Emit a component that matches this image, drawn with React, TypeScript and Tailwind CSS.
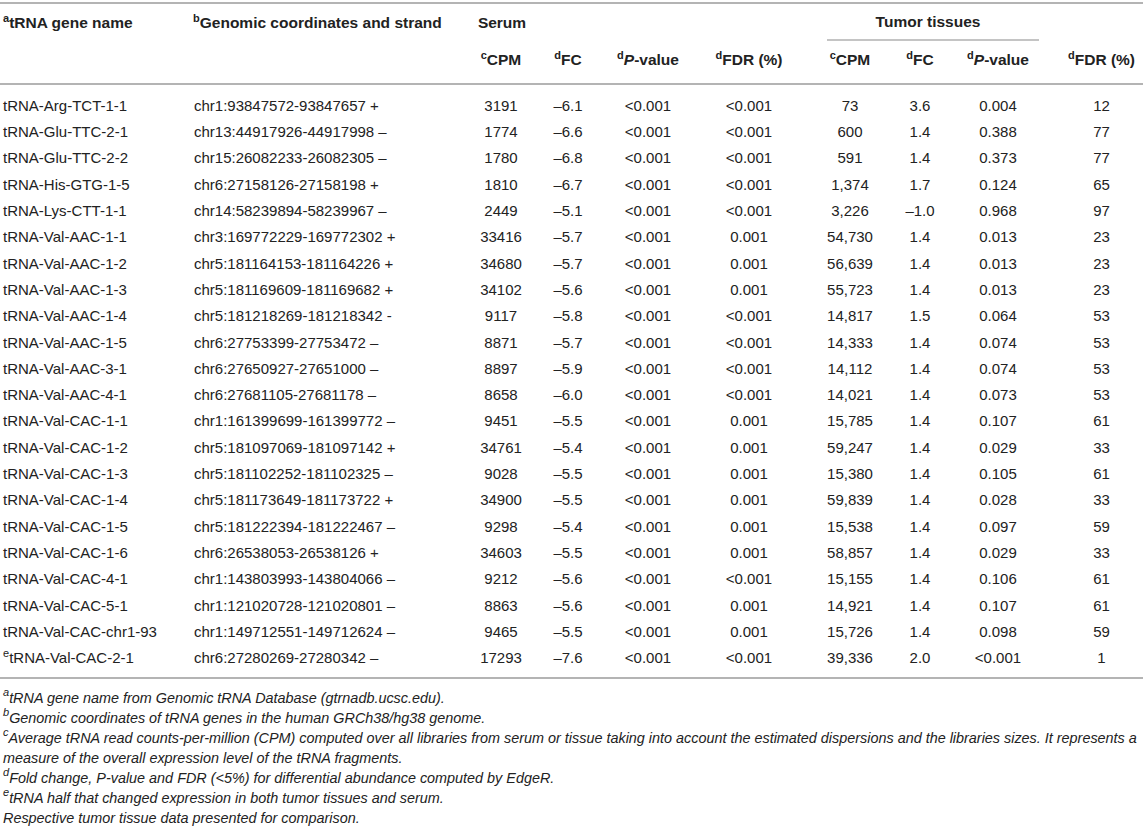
import React from 'react';

type Row = {
  gene: string;
  sup?: string;
  coord: string;
  cpm: string;
  fc: string;
  p: string;
  fdr: string;
  tCpm: string;
  tFc: string;
  tP: string;
  tFdr: string;
};

const raw: string[][] = [
  ['tRNA-Arg-TCT-1-1', 'chr1:93847572-93847657 +', '3191', '–6.1', '<0.001', '<0.001', '73', '3.6', '0.004', '12'],
  ['tRNA-Glu-TTC-2-1', 'chr13:44917926-44917998 –', '1774', '–6.6', '<0.001', '<0.001', '600', '1.4', '0.388', '77'],
  ['tRNA-Glu-TTC-2-2', 'chr15:26082233-26082305 –', '1780', '–6.8', '<0.001', '<0.001', '591', '1.4', '0.373', '77'],
  ['tRNA-His-GTG-1-5', 'chr6:27158126-27158198 +', '1810', '–6.7', '<0.001', '<0.001', '1,374', '1.7', '0.124', '65'],
  ['tRNA-Lys-CTT-1-1', 'chr14:58239894-58239967 –', '2449', '–5.1', '<0.001', '<0.001', '3,226', '–1.0', '0.968', '97'],
  ['tRNA-Val-AAC-1-1', 'chr3:169772229-169772302 +', '33416', '–5.7', '<0.001', '0.001', '54,730', '1.4', '0.013', '23'],
  ['tRNA-Val-AAC-1-2', 'chr5:181164153-181164226 +', '34680', '–5.7', '<0.001', '0.001', '56,639', '1.4', '0.013', '23'],
  ['tRNA-Val-AAC-1-3', 'chr5:181169609-181169682 +', '34102', '–5.6', '<0.001', '0.001', '55,723', '1.4', '0.013', '23'],
  ['tRNA-Val-AAC-1-4', 'chr5:181218269-181218342 -', '9117', '–5.8', '<0.001', '<0.001', '14,817', '1.5', '0.064', '53'],
  ['tRNA-Val-AAC-1-5', 'chr6:27753399-27753472 –', '8871', '–5.7', '<0.001', '<0.001', '14,333', '1.4', '0.074', '53'],
  ['tRNA-Val-AAC-3-1', 'chr6:27650927-27651000 –', '8897', '–5.9', '<0.001', '<0.001', '14,112', '1.4', '0.074', '53'],
  ['tRNA-Val-AAC-4-1', 'chr6:27681105-27681178 –', '8658', '–6.0', '<0.001', '<0.001', '14,021', '1.4', '0.073', '53'],
  ['tRNA-Val-CAC-1-1', 'chr1:161399699-161399772 –', '9451', '–5.5', '<0.001', '0.001', '15,785', '1.4', '0.107', '61'],
  ['tRNA-Val-CAC-1-2', 'chr5:181097069-181097142 +', '34761', '–5.4', '<0.001', '0.001', '59,247', '1.4', '0.029', '33'],
  ['tRNA-Val-CAC-1-3', 'chr5:181102252-181102325 –', '9028', '–5.5', '<0.001', '0.001', '15,380', '1.4', '0.105', '61'],
  ['tRNA-Val-CAC-1-4', 'chr5:181173649-181173722 +', '34900', '–5.5', '<0.001', '0.001', '59,839', '1.4', '0.028', '33'],
  ['tRNA-Val-CAC-1-5', 'chr5:181222394-181222467 –', '9298', '–5.4', '<0.001', '0.001', '15,538', '1.4', '0.097', '59'],
  ['tRNA-Val-CAC-1-6', 'chr6:26538053-26538126 +', '34603', '–5.5', '<0.001', '0.001', '58,857', '1.4', '0.029', '33'],
  ['tRNA-Val-CAC-4-1', 'chr1:143803993-143804066 –', '9212', '–5.6', '<0.001', '<0.001', '15,155', '1.4', '0.106', '61'],
  ['tRNA-Val-CAC-5-1', 'chr1:121020728-121020801 –', '8863', '–5.6', '<0.001', '0.001', '14,921', '1.4', '0.107', '61'],
  ['tRNA-Val-CAC-chr1-93', 'chr1:149712551-149712624 –', '9465', '–5.5', '<0.001', '0.001', '15,726', '1.4', '0.098', '59'],
  ['tRNA-Val-CAC-2-1', 'chr6:27280269-27280342 –', '17293', '–7.6', '<0.001', '<0.001', '39,336', '2.0', '<0.001', '1'],
];

const rows: Row[] = raw.map((r, i) => ({
  gene: r[0],
  sup: i === raw.length - 1 ? 'e' : undefined,
  coord: r[1],
  cpm: r[2],
  fc: r[3],
  p: r[4],
  fdr: r[5],
  tCpm: r[6],
  tFc: r[7],
  tP: r[8],
  tFdr: r[9],
}));

const cols = 'grid grid-cols-[190px_282px_58px_76px_84px_118px_84px_56px_100px_95px]';

function Sup({ children }: { children: React.ReactNode }) {
  return <sup className="text-[11px] -top-[0.55em]">{children}</sup>;
}

function HeadCell({ sup, children, italicP }: { sup: string; children?: React.ReactNode; italicP?: boolean }) {
  return (
    <div className="text-center">
      <Sup>{sup}</Sup>
      {italicP ? (
        <>
          <i>P</i>-value
        </>
      ) : (
        children
      )}
    </div>
  );
}

export default function App() {
  return (
    <div
      className="w-[1143px] h-[828px] bg-white text-[#222] pt-[2px]"
      style={{ fontFamily: '"Liberation Sans", Arial, sans-serif' }}
    >
      {/* en-tête du tableau */}
      <div className="border-t-2 border-b-2 border-[#b4b4b4] text-[15.5px] font-bold">
        <div className={`${cols} h-[38px] items-center`}>
          <div className="pl-[3px]">
            <Sup>a</Sup>tRNA gene name
          </div>
          <div className="pl-[3px]">
            <Sup>b</Sup>Genomic coordinates and strand
          </div>
          <div className="text-center pl-[2px]">Serum</div>
          <div />
          <div />
          <div />
          <div className="col-span-3 self-stretch flex flex-col justify-end">
            <div className="text-center pb-[6px]">Tumor tissues</div>
            <div className="ml-[19px] mr-[9px] h-[2px] bg-[#c4c4c4] mb-[1px]" />
          </div>
          <div />
        </div>
        <div className={`${cols} h-[41px] items-center pb-[6px]`}>
          <div />
          <div />
          <HeadCell sup="c">CPM</HeadCell>
          <HeadCell sup="d">FC</HeadCell>
          <HeadCell sup="d" italicP />
          <HeadCell sup="d">FDR (%)</HeadCell>
          <HeadCell sup="c">CPM</HeadCell>
          <HeadCell sup="d">FC</HeadCell>
          <HeadCell sup="d" italicP />
          <div className="text-center pl-[12px]">
            <Sup>d</Sup>FDR (%)
          </div>
        </div>
      </div>

      {/* lignes de données */}
      <div className="border-b-2 border-[#b4b4b4] pt-[8px] pb-[5px] text-[15px]">
        {rows.map((r) => (
          <div key={r.gene + r.coord} className={`${cols} h-[26.3px] items-center whitespace-nowrap`}>
            <div className="pl-[3px]">
              {r.sup && <Sup>{r.sup}</Sup>}
              {r.gene}
            </div>
            <div className="pl-[4px]">{r.coord}</div>
            <div className="text-center">{r.cpm}</div>
            <div className="text-center">{r.fc}</div>
            <div className="text-center">{r.p}</div>
            <div className="text-center">{r.fdr}</div>
            <div className="text-center">{r.tCpm}</div>
            <div className="text-center">{r.tFc}</div>
            <div className="text-center">{r.tP}</div>
            <div className="text-center pl-[12px]">{r.tFdr}</div>
          </div>
        ))}
      </div>

      {/* notes */}
      <div className="pt-[9px] pl-[3px] text-[14.4px] italic leading-[20px]">
        <p>
          <Sup>a</Sup>tRNA gene name from Genomic tRNA Database (gtrnadb.ucsc.edu).
        </p>
        <p>
          <Sup>b</Sup>Genomic coordinates of tRNA genes in the human GRCh38/hg38 genome.
        </p>
        <p>
          <Sup>c</Sup>Average tRNA read counts-per-million (CPM) computed over all libraries from serum or tissue
          taking into account the estimated dispersions and the libraries sizes. It represents a
          <br />
          measure of the overall expression level of the tRNA fragments.
        </p>
        <p>
          <Sup>d</Sup>Fold change, P-value and FDR (&lt;5%) for differential abundance computed by EdgeR.
        </p>
        <p>
          <Sup>e</Sup>tRNA half that changed expression in both tumor tissues and serum.
        </p>
        <p>Respective tumor tissue data presented for comparison.</p>
      </div>
    </div>
  );
}
